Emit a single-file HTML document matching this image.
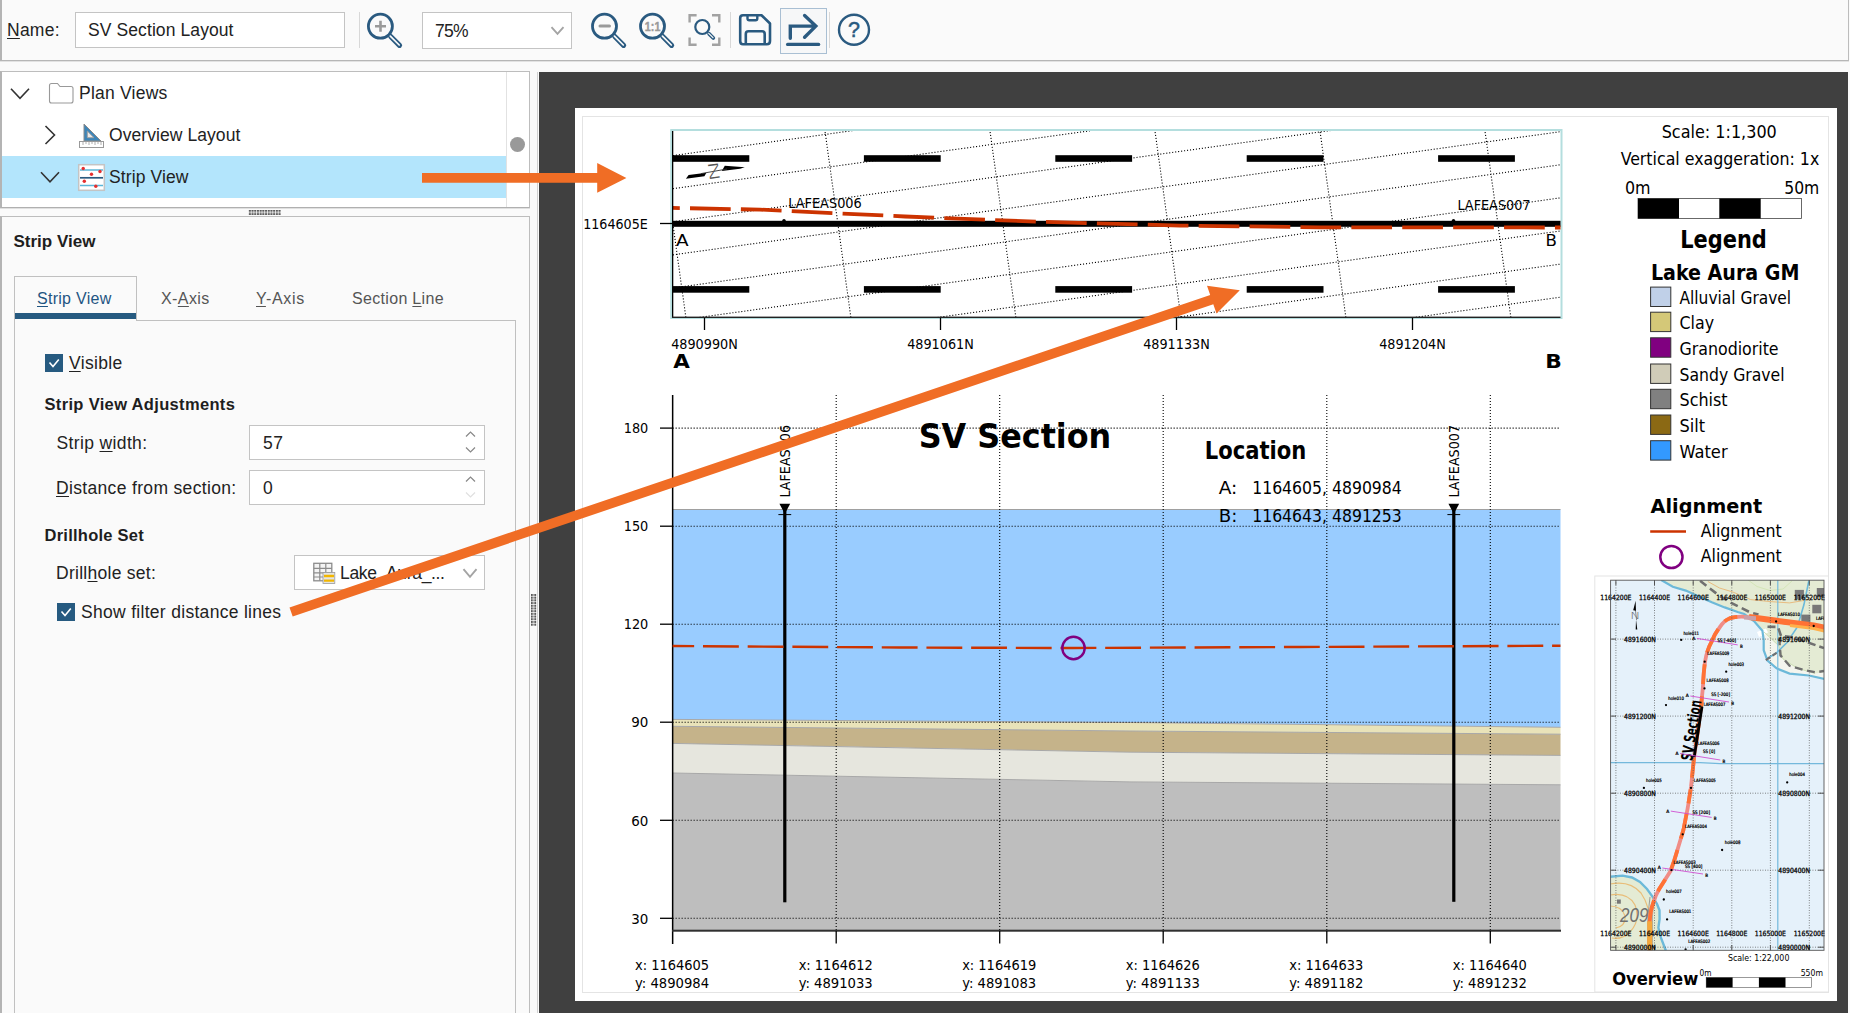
<!DOCTYPE html><html><head><meta charset="utf-8"><title>SV Section Layout</title><style>
html,body{margin:0;padding:0}
body{width:1850px;height:1013px;position:relative;overflow:hidden;background:#fafafa;font-family:"Liberation Sans", sans-serif;font-size:17.5px;color:#222}
.abs{position:absolute}
.t{position:absolute;white-space:nowrap;line-height:20px}
u{text-decoration:underline;text-underline-offset:2px;text-decoration-thickness:1px}
.box{position:absolute;box-sizing:border-box;border:1px solid #c4c4c4;background:#fff}
.b{font-weight:bold}
svg{position:absolute;left:0;top:0}
svg text{font-family:"DejaVu Sans Condensed", "DejaVu Sans", "Liberation Sans", sans-serif;fill:#000}
.ui{font-family:"Liberation Sans", sans-serif}
</style></head><body>
<div class="abs" style="left:0;top:0;width:1849px;height:61px;box-sizing:border-box;border-left:2px solid #b4b4b4;border-right:1px solid #bcbcbc;border-bottom:1px solid #b6b6b6;box-shadow:0 1px 0 #e2e2e2;background:#fafafa"></div>
<div class="t " style="left:7px;top:20px;font-size:17.5px;letter-spacing:0.250px"><u>N</u>ame:</div>
<div class="box" style="left:75px;top:12px;width:270px;height:36px"></div>
<div class="t " style="left:88px;top:20px;font-size:17.5px;letter-spacing:0.094px">SV Section Layout</div>
<div class="abs" style="left:359px;top:12px;width:1px;height:36px;background:#d8d8d8"></div>
<div class="box" style="left:422px;top:12px;width:149.5px;height:37px"></div>
<div class="t " style="left:435px;top:20.7px;font-size:17.5px;letter-spacing:-0.750px">75%</div>
<div class="abs" style="left:730px;top:12px;width:1px;height:36px;background:#d8d8d8"></div>
<div class="abs" style="left:829px;top:12px;width:1px;height:36px;background:#d8d8d8"></div>
<div class="box" style="left:780px;top:8px;width:47px;height:46px;border-color:#a9bfd3;background:#f6f7f8"></div>
<div class="box" style="left:0;top:71px;width:530px;height:137px;border-color:#bdbdbd;border-left:2px solid #b4b4b4;border-bottom:1px solid #b0b0b0;box-shadow:0 1px 0 #e0e0e0"></div>
<div class="abs" style="left:2px;top:156px;width:504px;height:42px;background:#b3e5fc"></div>
<div class="abs" style="left:506px;top:72px;width:1px;height:135px;background:#e2e2e2"></div>
<div class="abs" style="left:510px;top:137px;width:15px;height:15px;border-radius:50%;background:#999"></div>
<div class="t " style="left:79px;top:83px;font-size:17.5px;letter-spacing:0.222px">Plan Views</div>
<div class="t " style="left:109px;top:125px;font-size:17.5px;letter-spacing:0.071px">Overview Layout</div>
<div class="t " style="left:109px;top:167px;font-size:17.5px;letter-spacing:0.111px">Strip View</div>
<div class="box" style="left:0;top:216px;width:530px;height:800px;border-color:#bdbdbd;border-left:2px solid #b4b4b4;background:#fafafa"></div>
<div class="t b" style="left:13.5px;top:232px;font-size:17px;color:#1e1e1e;letter-spacing:0.000px">Strip View</div>
<div class="box" style="left:14px;top:320px;width:502px;height:700px;border-color:#c0c0c0;background:#fafafa"></div>
<div class="box" style="left:14px;top:276px;width:123px;height:45px;border-color:#c0c0c0;border-bottom:none;background:#fafafa"></div>
<div class="abs" style="left:15px;top:313px;width:121px;height:6px;background:#265a80"></div>
<div class="t " style="left:37px;top:289px;font-size:16px;color:#1f5582;letter-spacing:0.278px"><u>S</u>trip View</div>
<div class="t " style="left:161px;top:289px;font-size:16px;color:#555;letter-spacing:0.400px">X-<u>A</u>xis</div>
<div class="t " style="left:256px;top:289px;font-size:16px;color:#555;letter-spacing:0.700px"><u>Y</u>-Axis</div>
<div class="t " style="left:352px;top:289px;font-size:16px;color:#555;letter-spacing:0.318px">Section <u>L</u>ine</div>
<div class="abs" style="left:45px;top:354px;width:18px;height:18px;background:#265a80"></div>
<div class="t " style="left:69px;top:353px;font-size:17.5px;letter-spacing:0.333px"><u>V</u>isible</div>
<div class="t b" style="left:44.5px;top:394px;font-size:16.5px;color:#1e1e1e;letter-spacing:0.333px">Strip View Adjustments</div>
<div class="t " style="left:56.5px;top:433px;font-size:17.5px;letter-spacing:0.364px">Strip <u>w</u>idth:</div>
<div class="box" style="left:249px;top:425px;width:236px;height:35px"></div>
<div class="t " style="left:263px;top:433px;font-size:17.5px;letter-spacing:0.500px">57</div>
<div class="t " style="left:56px;top:478px;font-size:17.5px;letter-spacing:0.333px"><u>D</u>istance from section:</div>
<div class="box" style="left:249px;top:470px;width:236px;height:35px"></div>
<div class="t " style="left:263px;top:478px;font-size:17.5px">0</div>
<div class="t b" style="left:44.5px;top:525px;font-size:16.5px;color:#1e1e1e;letter-spacing:0.250px">Drillhole Set</div>
<div class="t " style="left:56px;top:563px;font-size:17.5px;letter-spacing:0.269px">Drill<u>h</u>ole set:</div>
<div class="box" style="left:294px;top:555px;width:191px;height:35px"></div>
<div class="t " style="left:340px;top:563px;font-size:17.5px;letter-spacing:-0.333px">Lake_Aura_...</div>
<div class="abs" style="left:57px;top:603px;width:18px;height:18px;background:#265a80"></div>
<div class="t " style="left:81px;top:602px;font-size:17.5px;letter-spacing:0.300px">Show filter distance lines</div>
<div class="abs" style="left:537px;top:72px;width:1px;height:941px;background:#d0d0d0"></div>
<div class="abs" style="left:539px;top:72px;width:1309px;height:941px;background:#404040"></div>
<div class="abs" style="left:575px;top:108px;width:1262px;height:892.5px;background:#fff"></div>
<div class="abs" style="left:582px;top:116px;width:1247px;height:877px;box-sizing:border-box;border:1px solid #e4e4e4"></div>
<svg width="1850" height="1013" viewBox="0 0 1850 1013">
<rect x="671.25" y="130" width="890.25" height="188" fill="#fff" stroke="#b4dede" stroke-width="2"/>
<clipPath id="sc"><rect x="672" y="131" width="888.5" height="186"/></clipPath>
<g clip-path="url(#sc)">
<path d="M667 123.3L1566 -1.5 M667 156.4L1566 31.6 M667 189.5L1566 64.7 M667 222.6L1566 97.8 M667 255.7L1566 130.9 M667 288.8L1566 164.0 M667 321.9L1566 197.1 M667 355.0L1566 230.2 M667 388.1L1566 263.3 M667 421.2L1566 296.4 M667 454.3L1566 329.5 M659.7 129L686.1 319 M824.7 129L851.1 319 M989.7 129L1016.1 319 M1154.7 129L1181.1 319 M1319.7 129L1346.1 319 M1484.7 129L1511.1 319 M1649.7 129L1676.1 319" stroke="#000" stroke-width="1.1" stroke-dasharray="1.1 1.9" fill="none"/>
<rect x="672.5" y="155.2" width="76.8" height="6.6" fill="#000"/>
<rect x="863.9" y="155.2" width="76.8" height="6.6" fill="#000"/>
<rect x="1055.3" y="155.2" width="76.8" height="6.6" fill="#000"/>
<rect x="1246.7" y="155.2" width="76.8" height="6.6" fill="#000"/>
<rect x="1438.1" y="155.2" width="76.8" height="6.6" fill="#000"/>
<rect x="672.5" y="286.09999999999997" width="76.8" height="6.6" fill="#000"/>
<rect x="863.9" y="286.09999999999997" width="76.8" height="6.6" fill="#000"/>
<rect x="1055.3" y="286.09999999999997" width="76.8" height="6.6" fill="#000"/>
<rect x="1246.7" y="286.09999999999997" width="76.8" height="6.6" fill="#000"/>
<rect x="1438.1" y="286.09999999999997" width="76.8" height="6.6" fill="#000"/>
</g>
<rect x="672" y="220.8" width="888.5" height="6" fill="#000"/>
<path d="M672.5 207.9 L760 209.6 L905 216.5 L1040 221.8 L1180 225.6 L1320 227.3 L1561 227.5" stroke="#cc3300" stroke-width="3.8" stroke-dasharray="40.7 10.2" stroke-dashoffset="33.4" fill="none" clip-path="url(#sc)"/>
<rect x="672" y="131" width="1.3" height="187" fill="#000"/>
<rect x="672" y="316.6" width="888.5" height="1.4" fill="#222"/>
<path d="M660 223.5H672" stroke="#000" stroke-width="1.3"/>
<path d="M704.5 318V330" stroke="#000" stroke-width="1.3"/>
<path d="M940.5 318V330" stroke="#000" stroke-width="1.3"/>
<path d="M1176.5 318V330" stroke="#000" stroke-width="1.3"/>
<path d="M1412.5 318V330" stroke="#000" stroke-width="1.3"/>
<text x="583.2" y="229" font-size="14.5" textLength="64.6" lengthAdjust="spacingAndGlyphs">1164605E</text>
<text x="704.5" y="348.6" font-size="14.5" text-anchor="middle" textLength="66.6" lengthAdjust="spacingAndGlyphs">4890990N</text>
<text x="940.5" y="348.6" font-size="14.5" text-anchor="middle" textLength="66.6" lengthAdjust="spacingAndGlyphs">4891061N</text>
<text x="1176.5" y="348.6" font-size="14.5" text-anchor="middle" textLength="66.6" lengthAdjust="spacingAndGlyphs">4891133N</text>
<text x="1412.5" y="348.6" font-size="14.5" text-anchor="middle" textLength="66.6" lengthAdjust="spacingAndGlyphs">4891204N</text>
<text x="673.2" y="368" font-size="19" textLength="16.6" lengthAdjust="spacingAndGlyphs" font-weight="bold">A</text>
<text x="1545.2" y="368" font-size="19" textLength="16.6" lengthAdjust="spacingAndGlyphs" font-weight="bold">B</text>
<text x="676.0" y="245.5" font-size="16.5" textLength="12.6" lengthAdjust="spacingAndGlyphs">A</text>
<text x="1545.5" y="245.7" font-size="16.5" textLength="11.4" lengthAdjust="spacingAndGlyphs">B</text>
<text x="788.2" y="208.4" font-size="13.5" textLength="73.6" lengthAdjust="spacingAndGlyphs">LAFEAS006</text>
<text x="1457.4" y="209.7" font-size="13.5" textLength="73.1" lengthAdjust="spacingAndGlyphs">LAFEAS007</text>
<circle cx="784" cy="220.6" r="1.7"/><circle cx="1453.5" cy="220.6" r="1.7"/>
<path d="M685.9 178.8 L688.6 175 L706.4 172.8 L704.4 176.2Z M724.8 165.8 L744.8 167.3 L740 168.8 L721.8 170.9Z" fill="#000"/>
<path d="M701 173.6 L727 169" stroke="#333" stroke-width="0.9" fill="none"/>
<text transform="translate(707.4 161.2) rotate(82)" font-size="13.6" font-weight="200" textLength="22.5" lengthAdjust="spacingAndGlyphs" style="fill:#555;font-family:'DejaVu Sans Light','DejaVu Sans',sans-serif">N</text>
<path d="M672.6 509.5 L1560.5 509.5 L1560.5 727.3 L1130.0 722.5 L672.6 719.4Z" fill="#99ccff"/>
<path d="M672.6 719.4 L1130.0 722.5 L1560.5 727.3 L1560.5 734.2 L1130.0 731.0 L672.6 726.3Z" fill="#e9e3b9"/>
<path d="M672.6 726.3 L1130.0 731.0 L1560.5 734.2 L1560.5 755.4 L1130.0 752.2 L672.6 743.4Z" fill="#c5b38a"/>
<path d="M672.6 743.4 L1130.0 752.2 L1560.5 755.4 L1560.5 784.8 L1130.0 781.9 L672.6 773.0Z" fill="#e6e6de"/>
<path d="M672.6 773.0 L1130.0 781.9 L1560.5 784.8 L1560.5 930.7 L672.6 930.7Z" fill="#bebebe"/>
<path d="M672.6 719.4 L1130.0 722.5 L1560.5 727.3" stroke="#a8a8a8" stroke-width="1" fill="none"/>
<path d="M672.6 726.3 L1130.0 731.0 L1560.5 734.2" stroke="#a8a8a8" stroke-width="1" fill="none"/>
<path d="M672.6 743.4 L1130.0 752.2 L1560.5 755.4" stroke="#a8a8a8" stroke-width="1" fill="none"/>
<path d="M672.6 773.0 L1130.0 781.9 L1560.5 784.8" stroke="#a8a8a8" stroke-width="1" fill="none"/>
<path d="M672.6 509.5H1560.5" stroke="#a0a0a0" stroke-width="1"/>
<path d="M672.6 918.3H1560.5 M672.6 820.3H1560.5 M672.6 722.2H1560.5 M672.6 624.2H1560.5 M672.6 526.2H1560.5 M672.6 428.1H1560.5 M836.2 395V930.7 M999.7 395V930.7 M1163.2 395V930.7 M1326.8 395V930.7 M1490.3 395V930.7" stroke="#000" stroke-width="1.1" stroke-dasharray="1.1 1.9" fill="none"/>
<rect x="671.9" y="395" width="1.5" height="549" fill="#000"/>
<rect x="672" y="929.7" width="889" height="2" fill="#303030"/>
<path d="M660 918.3H672" stroke="#000" stroke-width="1.3"/>
<text x="648.3" y="923.5" font-size="14.5" text-anchor="end" textLength="17.1" lengthAdjust="spacingAndGlyphs">30</text>
<path d="M660 820.3H672" stroke="#000" stroke-width="1.3"/>
<text x="648.3" y="825.5" font-size="14.5" text-anchor="end" textLength="17.1" lengthAdjust="spacingAndGlyphs">60</text>
<path d="M660 722.2H672" stroke="#000" stroke-width="1.3"/>
<text x="648.3" y="727.4" font-size="14.5" text-anchor="end" textLength="17.1" lengthAdjust="spacingAndGlyphs">90</text>
<path d="M660 624.2H672" stroke="#000" stroke-width="1.3"/>
<text x="648.3" y="629.4" font-size="14.5" text-anchor="end" textLength="24.6" lengthAdjust="spacingAndGlyphs">120</text>
<path d="M660 526.2H672" stroke="#000" stroke-width="1.3"/>
<text x="648.3" y="531.4" font-size="14.5" text-anchor="end" textLength="24.6" lengthAdjust="spacingAndGlyphs">150</text>
<path d="M660 428.1H672" stroke="#000" stroke-width="1.3"/>
<text x="648.3" y="433.3" font-size="14.5" text-anchor="end" textLength="24.6" lengthAdjust="spacingAndGlyphs">180</text>
<text x="672.1" y="970.2" font-size="14.5" text-anchor="middle" textLength="74.1" lengthAdjust="spacingAndGlyphs">x: 1164605</text>
<text x="672.1" y="988.2" font-size="14.5" text-anchor="middle" textLength="74.1" lengthAdjust="spacingAndGlyphs">y: 4890984</text>
<path d="M836.2 931V943.5" stroke="#000" stroke-width="1.3"/>
<text x="835.7" y="970.2" font-size="14.5" text-anchor="middle" textLength="74.1" lengthAdjust="spacingAndGlyphs">x: 1164612</text>
<text x="835.7" y="988.2" font-size="14.5" text-anchor="middle" textLength="74.1" lengthAdjust="spacingAndGlyphs">y: 4891033</text>
<path d="M999.7 931V943.5" stroke="#000" stroke-width="1.3"/>
<text x="999.2" y="970.2" font-size="14.5" text-anchor="middle" textLength="74.1" lengthAdjust="spacingAndGlyphs">x: 1164619</text>
<text x="999.2" y="988.2" font-size="14.5" text-anchor="middle" textLength="74.1" lengthAdjust="spacingAndGlyphs">y: 4891083</text>
<path d="M1163.2 931V943.5" stroke="#000" stroke-width="1.3"/>
<text x="1162.8" y="970.2" font-size="14.5" text-anchor="middle" textLength="74.1" lengthAdjust="spacingAndGlyphs">x: 1164626</text>
<text x="1162.8" y="988.2" font-size="14.5" text-anchor="middle" textLength="74.1" lengthAdjust="spacingAndGlyphs">y: 4891133</text>
<path d="M1326.8 931V943.5" stroke="#000" stroke-width="1.3"/>
<text x="1326.3" y="970.2" font-size="14.5" text-anchor="middle" textLength="74.1" lengthAdjust="spacingAndGlyphs">x: 1164633</text>
<text x="1326.3" y="988.2" font-size="14.5" text-anchor="middle" textLength="74.1" lengthAdjust="spacingAndGlyphs">y: 4891182</text>
<path d="M1490.3 931V943.5" stroke="#000" stroke-width="1.3"/>
<text x="1489.8" y="970.2" font-size="14.5" text-anchor="middle" textLength="74.1" lengthAdjust="spacingAndGlyphs">x: 1164640</text>
<text x="1489.8" y="988.2" font-size="14.5" text-anchor="middle" textLength="74.1" lengthAdjust="spacingAndGlyphs">y: 4891232</text>
<text x="918.7" y="448" font-size="34" textLength="192.6" lengthAdjust="spacingAndGlyphs" font-weight="bold">SV Section</text>
<text x="1204.7" y="458.5" font-size="24" textLength="101.6" lengthAdjust="spacingAndGlyphs" font-weight="bold">Location</text>
<text x="1218.7" y="493.7" font-size="17" textLength="18.6" lengthAdjust="spacingAndGlyphs">A:</text>
<text x="1252.2" y="493.7" font-size="17" textLength="149.6" lengthAdjust="spacingAndGlyphs">1164605, 4890984</text>
<text x="1218.7" y="521.5" font-size="17" textLength="18.6" lengthAdjust="spacingAndGlyphs">B:</text>
<text x="1252.2" y="521.5" font-size="17" textLength="149.6" lengthAdjust="spacingAndGlyphs">1164643, 4891253</text>
<rect x="783.1999999999999" y="508" width="3.2" height="394.29999999999995" fill="#000"/>
<path d="M779.4 503.8H790.1999999999999L784.8 513.8Z" fill="#000"/>
<path d="M778.4 514.6H791.1999999999999" stroke="#000" stroke-width="1"/>
<text transform="translate(789.9 497.6) rotate(-90)" font-size="14.4" textLength="72.6" lengthAdjust="spacingAndGlyphs">LAFEAS006</text>
<rect x="1452.2" y="508" width="3.2" height="393.79999999999995" fill="#000"/>
<path d="M1448.3999999999999 503.8H1459.2L1453.8 513.8Z" fill="#000"/>
<path d="M1447.3999999999999 514.6H1460.2" stroke="#000" stroke-width="1"/>
<text transform="translate(1458.8999999999999 497.6) rotate(-90)" font-size="14.4" textLength="72.6" lengthAdjust="spacingAndGlyphs">LAFEAS007</text>
<path d="M672.6 646 L900 647.5 L1073 648 L1300 647 L1560.5 645.7" stroke="#cc3300" stroke-width="2.4" stroke-dasharray="35.85 8.84" stroke-dashoffset="14.3" fill="none"/>
<circle cx="1073.5" cy="648" r="11.2" fill="none" stroke="#800080" stroke-width="2.4"/>
<text x="1661.7" y="138.1" font-size="17" textLength="115.1" lengthAdjust="spacingAndGlyphs">Scale: 1:1,300</text>
<text x="1620.7" y="165.1" font-size="17" textLength="198.6" lengthAdjust="spacingAndGlyphs">Vertical exaggeration: 1x</text>
<text x="1624.9" y="194.29999999999998" font-size="17" textLength="25.6" lengthAdjust="spacingAndGlyphs">0m</text>
<text x="1819.3" y="194.29999999999998" font-size="17" text-anchor="end" textLength="35.1" lengthAdjust="spacingAndGlyphs">50m</text>
<rect x="1638" y="198.5" width="163.5" height="20" fill="#fff" stroke="#444" stroke-width="0.8"/>
<rect x="1638" y="198.5" width="41" height="20" fill="#000"/><rect x="1719.3" y="198.5" width="41.4" height="20" fill="#000"/>
<text x="1680.2" y="248.1" font-size="24" textLength="86.6" lengthAdjust="spacingAndGlyphs" font-weight="bold">Legend</text>
<text x="1650.9" y="279.59999999999997" font-size="21" textLength="148.6" lengthAdjust="spacingAndGlyphs" font-weight="bold">Lake Aura GM</text>
<rect x="1650.6" y="287.09999999999997" width="20.2" height="19.4" fill="#c0d0e8" stroke="#333" stroke-width="1"/>
<text x="1679.5" y="304.1" font-size="17" textLength="111.6" lengthAdjust="spacingAndGlyphs">Alluvial Gravel</text>
<rect x="1650.6" y="312.2" width="20.2" height="19.4" fill="#d4c878" stroke="#333" stroke-width="1"/>
<text x="1679.5" y="329.2" font-size="17" textLength="34.6" lengthAdjust="spacingAndGlyphs">Clay</text>
<rect x="1650.6" y="337.79999999999995" width="20.2" height="19.4" fill="#800080" stroke="#333" stroke-width="1"/>
<text x="1679.5" y="354.8" font-size="17" textLength="99.1" lengthAdjust="spacingAndGlyphs">Granodiorite</text>
<rect x="1650.6" y="364.0" width="20.2" height="19.4" fill="#d0ccb8" stroke="#333" stroke-width="1"/>
<text x="1679.5" y="381.0" font-size="17" textLength="105.1" lengthAdjust="spacingAndGlyphs">Sandy Gravel</text>
<rect x="1650.6" y="389.29999999999995" width="20.2" height="19.4" fill="#808080" stroke="#333" stroke-width="1"/>
<text x="1679.5" y="406.3" font-size="17" textLength="48.1" lengthAdjust="spacingAndGlyphs">Schist</text>
<rect x="1650.6" y="415.0" width="20.2" height="19.4" fill="#8b6914" stroke="#333" stroke-width="1"/>
<text x="1679.5" y="432.0" font-size="17" textLength="25.6" lengthAdjust="spacingAndGlyphs">Silt</text>
<rect x="1650.6" y="440.7" width="20.2" height="19.4" fill="#3399ff" stroke="#333" stroke-width="1"/>
<text x="1679.5" y="457.7" font-size="17" textLength="48.1" lengthAdjust="spacingAndGlyphs">Water</text>
<text x="1650.6" y="512.8000000000001" font-size="20" textLength="111.6" lengthAdjust="spacingAndGlyphs" font-weight="bold">Alignment</text>
<path d="M1650.2 531.6H1686" stroke="#cc3300" stroke-width="2.5"/>
<text x="1700.7" y="536.7" font-size="17" textLength="81.1" lengthAdjust="spacingAndGlyphs">Alignment</text>
<circle cx="1671.4" cy="557" r="11.1" fill="none" stroke="#800080" stroke-width="2.5"/>
<text x="1700.7" y="562.2" font-size="17" textLength="81.1" lengthAdjust="spacingAndGlyphs">Alignment</text>
<clipPath id="ovc"><rect x="1590" y="570" width="238.5" height="430"/></clipPath>
<rect x="1594.8" y="576" width="300" height="416" fill="none" stroke="#e4e4e4" stroke-width="1" clip-path="url(#ovc)"/>
<clipPath id="mc"><rect x="1610.6" y="580.2" width="213.4000000000001" height="370.0999999999999"/></clipPath>
<rect x="1610.6" y="580.2" width="213.4000000000001" height="370.0999999999999" fill="#e5f1fa"/>
<g clip-path="url(#mc)">
<path d="M1661.2 580 L1672.8 586.7 L1685.8 590.6 L1698.8 596.4 L1711.8 602.2 L1724.7 607.4 L1737.7 612 L1744.2 613.9 L1754.6 621.7 L1762.4 630.8 L1763.7 639.9 L1763.7 650.2 L1767.5 660.6 L1776.6 668.4 L1789.6 673.6 L1809 675.5 L1825 679 L1825 579Z" fill="#e4ebd4"/>
<path d="M1762.4 630.8 L1763.7 639.9 L1763.7 650.2 L1767.5 660.6 L1776.6 668.4 L1789.6 673.6 L1809 675.5 L1825 679 L1825 672 L1815 673.5 L1797 668 L1783 659 L1779 646 L1764 632Z" fill="#f4f5ee"/>
<path d="M1757 632 L1766 628.5 L1768 632.5 L1759 637Z" fill="#fff"/>
<path d="M1764 632 L1779 646 L1783 659 L1797 668 L1815 673.5" stroke="#c5dba8" stroke-width="0.8" fill="none"/>
<path d="M1748 580 L1757 586.5 L1770 590.5 L1783 589 L1792 581" stroke="#cfe3b0" stroke-width="0.8" fill="none"/>
<path d="M1707.9 581.5 L1719.5 588 L1732.5 591.9 L1750.7 599.6 L1770.1 601.6 L1789.6 602.9 L1809.1 599.6" stroke="#e8ae6a" stroke-width="0.8" fill="none"/>
<path d="M1661.2 580 L1672.8 586.7 L1685.8 590.6 L1698.8 596.4 L1711.8 602.2 L1724.7 607.4 L1737.7 612 L1744.2 613.9 L1754.6 621.7 L1762.4 630.8 L1763.7 639.9 L1763.7 650.2 L1767.5 660.6 L1776.6 668.4 L1789.6 673.6 L1809 675.5 L1825 679" stroke="#6cb9d9" stroke-width="2.2" fill="none"/>
<path d="M1809 580 L1803.9 604.8 L1797.4 626.9 L1787 642.5 L1776.6 652.8 L1766.3 659.3" stroke="#6cb9d9" stroke-width="1.6" fill="none"/>
<path d="M1777.8 580 V950.5" stroke="#74b9dc" stroke-width="1.2" fill="none"/>
<path d="M1610 762.6 H1700 L1720 763.6 H1824" stroke="#74b9dc" stroke-width="1.2" fill="none"/>
<path d="M1700.1 580.8 L1709.2 588 L1719.5 595.8 L1731.2 602.9 L1741.6 608.1 L1750.7 612.6 L1758.5 614.6" stroke="#707070" stroke-width="2.6" stroke-dasharray="8 4.5" fill="none"/>
<path d="M1767.5 626.7 L1778 626.9 L1781 636 L1793.5 637.3 L1807.8 642.5 L1824 648" stroke="#707070" stroke-width="2.6" stroke-dasharray="8 4" fill="none"/>
<path d="M1779.2 637.3 L1780.5 655.4 L1789.6 665.8 L1802.6 669.7 L1815.5 672.3 L1824 671" stroke="#707070" stroke-width="2.4" stroke-dasharray="8 4.5" fill="none"/>
<path d="M1776.6 652.8 L1765 660.6" stroke="#707070" stroke-width="2.2" stroke-dasharray="5 3" fill="none"/>
<rect x="1794.8" y="589.9" width="9.1" height="9.1" fill="#787878"/>
<rect x="1816.8" y="588" width="8" height="9" fill="#787878"/>
<rect x="1812.3" y="604.8" width="9.1" height="8.5" fill="#787878"/>
<rect x="1801.3" y="614.6" width="9.1" height="7.8" fill="#787878"/>
<path d="M1609 876.9 L1622.6 875.6 L1632 877.5 L1640 882 L1647 889 L1653 897.3 L1657 904 L1659.5 910.3 L1659.6 919 L1658.4 927.7 L1661 938 L1666 951 L1609 951Z" fill="#e4ebd4"/>
<path d="M1609 876.9 L1622.6 875.6 L1632 877.5 L1640 882 L1647 889 L1653 897.3 L1657 904 L1659.5 910.3 L1659.6 919 L1658.4 927.7 L1661 938 L1666 951" stroke="#6cb9d9" stroke-width="2.4" fill="none"/>
<path d="M1610 884 Q1630 880 1641 893 Q1650 906 1650 925 M1610 895 Q1628 892 1635 905 Q1641 920 1630 932 Q1622 940 1612 938 M1610 906 Q1622 906 1625 916 Q1626 926 1616 928" stroke="#e9bd78" stroke-width="1.2" fill="none"/>
<rect x="1617" y="899.5" width="3.8" height="4.2" fill="#777"/>
<text x="1620" y="922.3" font-size="20" font-style="italic" textLength="28.5" lengthAdjust="spacingAndGlyphs" class="ui" style="fill:#707070">209</text>
<path d="M1650 897 L1648 915 L1647.5 951" stroke="#888" stroke-width="0.8" fill="none"/><path d="M1655 893 L1652.5 915 L1652.5 951" stroke="#888" stroke-width="0.6" fill="none"/>
<path d="M1649.7 952 L1649.7 921.2 Q1650.5 910 1653 903.8 Q1655.5 895 1659.5 888.6 L1670.4 871.2 Q1674 862 1676.9 851.7 L1683.4 830 L1687.7 808.2 L1691 787 L1694 758 L1697.5 733 L1700.8 709 L1702.9 687.3 Q1703.5 672 1705.1 661.2 Q1707 650 1711.6 641.7 Q1715 633 1720.3 626.5 Q1724 620.5 1729.5 618.4 Q1735 616.6 1742 616.7 L1759.4 618.4 L1776.8 621.3 L1813.7 626.2 L1826 628.8" stroke="#f08c86" stroke-width="3.8" fill="none" stroke-linejoin="round"/>
<path d="M1649.7 952 L1649.7 921.2 Q1650.5 910 1653 903.8 Q1655.5 895 1659.5 888.6 L1670.4 871.2 Q1674 862 1676.9 851.7 L1683.4 830 L1687.7 808.2 L1691 787 L1694 758 L1697.5 733 L1700.8 709 L1702.9 687.3 Q1703.5 672 1705.1 661.2 Q1707 650 1711.6 641.7 Q1715 633 1720.3 626.5 Q1724 620.5 1729.5 618.4 Q1735 616.6 1742 616.7 L1759.4 618.4 L1776.8 621.3 L1813.7 626.2 L1826 628.8" stroke="#ff7235" stroke-width="3.8" fill="none" stroke-dasharray="20 12 26 10 14 12" stroke-dashoffset="6" stroke-linejoin="round"/>
<path d="M1749 617 L1776.8 620.8 L1813.7 625.4 L1826 628" stroke="#ff7235" stroke-width="6" fill="none"/>
<path d="M1790 625.5 L1813.7 628.6 L1826 631.5" stroke="#ffb04a" stroke-width="3" fill="none"/>
<path d="M1649.7 952 L1649.7 921.2" stroke="#f5a83c" stroke-width="5" fill="none"/>
<path d="M1744 615.5 L1756 616.2 L1756 620.4 L1744 619.6Z" fill="#c9a0a8"/>
<path d="M1615.9 580V951 M1654.5 580V951 M1693.2 580V951 M1731.8 580V951 M1770.4 580V951 M1809.3 580V951 M1610 639.1H1825 M1610 716.1H1825 M1610 793.2H1825 M1610 870.2H1825 M1610 947.2H1825" stroke="#555" stroke-width="0.8" stroke-dasharray="0.9 1.6" fill="none"/>
<path d="M1615.9 580V585M1615.9 945V951 M1654.5 580V585M1654.5 945V951 M1693.2 580V585M1693.2 945V951 M1731.8 580V585M1731.8 945V951 M1770.4 580V585M1770.4 945V951 M1809.3 580V585M1809.3 945V951 M1610 639.1H1616M1818 639.1H1825 M1610 716.1H1616M1818 716.1H1825 M1610 793.2H1616M1818 793.2H1825 M1610 870.2H1616M1818 870.2H1825 M1610 947.2H1616M1818 947.2H1825" stroke="#444" stroke-width="0.9" fill="none"/>
<path d="M1702 706.5 L1694.2 757.1" stroke="#000" stroke-width="2.8"/>
<text transform="translate(1692.3 761.3) rotate(-81.3)" font-size="16" font-weight="bold" textLength="61" lengthAdjust="spacingAndGlyphs">SV Section</text>
<path d="M1696.9 638.4L1737.7 644.9" stroke="#d050d0" stroke-width="0.9"/>
<text x="1692.3000000000002" y="639.8" font-size="4.6" textLength="3" lengthAdjust="spacingAndGlyphs" stroke="#000" stroke-width="0.22">A</text>
<text x="1739.9" y="647.5" font-size="4.6" textLength="2.8" lengthAdjust="spacingAndGlyphs" stroke="#000" stroke-width="0.22">B</text>
<text x="1717.5" y="642" font-size="4.6" textLength="18.5" lengthAdjust="spacingAndGlyphs" stroke="#000" stroke-width="0.22">SS [-400]</text>
<path d="M1690.3 696L1729 702" stroke="#d050d0" stroke-width="0.9"/>
<text x="1685.7" y="697.4" font-size="4.6" textLength="3" lengthAdjust="spacingAndGlyphs" stroke="#000" stroke-width="0.22">A</text>
<text x="1731.2" y="704.6" font-size="4.6" textLength="2.8" lengthAdjust="spacingAndGlyphs" stroke="#000" stroke-width="0.22">B</text>
<text x="1711.2" y="695.5" font-size="4.6" textLength="18.8" lengthAdjust="spacingAndGlyphs" stroke="#000" stroke-width="0.22">SS [-200]</text>
<path d="M1680.1 753.5L1720.3 760" stroke="#d050d0" stroke-width="0.9"/>
<text x="1675.5" y="754.9" font-size="4.6" textLength="3" lengthAdjust="spacingAndGlyphs" stroke="#000" stroke-width="0.22">A</text>
<text x="1722.5" y="762.6" font-size="4.6" textLength="2.8" lengthAdjust="spacingAndGlyphs" stroke="#000" stroke-width="0.22">B</text>
<text x="1703" y="753" font-size="4.6" textLength="12" lengthAdjust="spacingAndGlyphs" stroke="#000" stroke-width="0.22">SS [0]</text>
<path d="M1670.8 811.1L1711.6 817.4" stroke="#d050d0" stroke-width="0.9"/>
<text x="1666.2" y="812.5" font-size="4.6" textLength="3" lengthAdjust="spacingAndGlyphs" stroke="#000" stroke-width="0.22">A</text>
<text x="1713.8" y="820.0" font-size="4.6" textLength="2.8" lengthAdjust="spacingAndGlyphs" stroke="#000" stroke-width="0.22">B</text>
<text x="1692.5" y="814.1" font-size="4.6" textLength="17.5" lengthAdjust="spacingAndGlyphs" stroke="#000" stroke-width="0.22">SS [200]</text>
<path d="M1662.3 868L1703 874" stroke="#d050d0" stroke-width="0.9"/>
<text x="1657.7" y="869.4" font-size="4.6" textLength="3" lengthAdjust="spacingAndGlyphs" stroke="#000" stroke-width="0.22">A</text>
<text x="1705.2" y="876.6" font-size="4.6" textLength="2.8" lengthAdjust="spacingAndGlyphs" stroke="#000" stroke-width="0.22">B</text>
<text x="1685" y="867.5" font-size="4.6" textLength="17.3" lengthAdjust="spacingAndGlyphs" stroke="#000" stroke-width="0.22">SS [400]</text>
<circle cx="1681.2" cy="639.9" r="1.15"/>
<text x="1683.4" y="634.5" font-size="4.6" textLength="15.7" lengthAdjust="spacingAndGlyphs" stroke="#000" stroke-width="0.22">hole011</text>
<circle cx="1726.2" cy="671.7" r="1.15"/>
<text x="1728.4" y="666.2" font-size="4.6" textLength="15.7" lengthAdjust="spacingAndGlyphs" stroke="#000" stroke-width="0.22">hole003</text>
<circle cx="1666" cy="705.1" r="1.15"/>
<text x="1668.2" y="699.7" font-size="4.6" textLength="15.7" lengthAdjust="spacingAndGlyphs" stroke="#000" stroke-width="0.22">hole010</text>
<circle cx="1787.2" cy="782.4" r="1.15"/>
<text x="1789.2" y="775.7" font-size="4.6" textLength="15.7" lengthAdjust="spacingAndGlyphs" stroke="#000" stroke-width="0.22">hole004</text>
<circle cx="1643.9" cy="787.9" r="1.15"/>
<text x="1646" y="781.8" font-size="4.6" textLength="15.7" lengthAdjust="spacingAndGlyphs" stroke="#000" stroke-width="0.22">hole005</text>
<circle cx="1722.1" cy="850" r="1.15"/>
<text x="1724.7" y="844.1" font-size="4.6" textLength="15.7" lengthAdjust="spacingAndGlyphs" stroke="#000" stroke-width="0.22">hole008</text>
<circle cx="1663.8" cy="899.5" r="1.15"/>
<text x="1666" y="893.4" font-size="4.6" textLength="15.7" lengthAdjust="spacingAndGlyphs" stroke="#000" stroke-width="0.22">hole007</text>
<circle cx="1704.7" cy="661.7" r="1.15"/>
<text x="1707.3" y="655.1" font-size="4.6" textLength="22" lengthAdjust="spacingAndGlyphs" stroke="#000" stroke-width="0.22">LAFEAS009</text>
<circle cx="1704.5" cy="688.4" r="1.15"/>
<text x="1706.6" y="682.3" font-size="4.6" textLength="22" lengthAdjust="spacingAndGlyphs" stroke="#000" stroke-width="0.22">LAFEAS008</text>
<text x="1703.4" y="706.2" font-size="4.6" textLength="22" lengthAdjust="spacingAndGlyphs" stroke="#000" stroke-width="0.22">LAFEAS007</text>
<text x="1697.5" y="745.3" font-size="4.6" textLength="22" lengthAdjust="spacingAndGlyphs" stroke="#000" stroke-width="0.22">LAFEAS006</text>
<circle cx="1691" cy="787.9" r="1.15"/>
<text x="1693.8" y="781.8" font-size="4.6" textLength="22" lengthAdjust="spacingAndGlyphs" stroke="#000" stroke-width="0.22">LAFEAS005</text>
<circle cx="1682.7" cy="834.3" r="1.15"/>
<text x="1684.9" y="828.2" font-size="4.6" textLength="22" lengthAdjust="spacingAndGlyphs" stroke="#000" stroke-width="0.22">LAFEAS004</text>
<circle cx="1671.5" cy="870.1" r="1.15"/>
<text x="1673.6" y="864.3" font-size="4.6" textLength="22" lengthAdjust="spacingAndGlyphs" stroke="#000" stroke-width="0.22">LAFEAS003</text>
<circle cx="1667.1" cy="919.4" r="1.15"/>
<text x="1669.3" y="913.1" font-size="4.6" textLength="22" lengthAdjust="spacingAndGlyphs" stroke="#000" stroke-width="0.22">LAFEAS001</text>
<circle cx="1685.6" cy="949.4" r="1.15"/>
<text x="1688.2" y="943.3" font-size="4.6" textLength="22" lengthAdjust="spacingAndGlyphs" stroke="#000" stroke-width="0.22">LAFEAS002</text>
<circle cx="1776.1" cy="621.5" r="1.15"/>
<text x="1777.9" y="615.6" font-size="4.6" textLength="22" lengthAdjust="spacingAndGlyphs" stroke="#000" stroke-width="0.22">LAFEAS010</text>
<circle cx="1813.7" cy="626" r="1.15"/>
<text x="1815.9" y="620.4" font-size="4.6" textLength="22" lengthAdjust="spacingAndGlyphs" stroke="#000" stroke-width="0.22">LAFEAS011</text>
<path d="M1635.6 600.8 L1633.2 610.2 L1636 610.8Z M1636 619.6 L1637.3 629.6 L1635.7 629.4Z" fill="#000"/><path d="M1635.4 610 L1636.6 620" stroke="#222" stroke-width="0.5"/>
<text x="1630.2" y="619.2" font-size="8" font-weight="200" textLength="10" lengthAdjust="spacingAndGlyphs" style="fill:#666;font-family:'DejaVu Sans Light','DejaVu Sans',sans-serif">N</text>
</g>
<text x="1615.9" y="599.8" font-size="7.1" text-anchor="middle" textLength="31.2" lengthAdjust="spacingAndGlyphs" stroke="#000" stroke-width="0.25">1164200E</text>
<text x="1615.9" y="936" font-size="7.1" text-anchor="middle" textLength="31.2" lengthAdjust="spacingAndGlyphs" stroke="#000" stroke-width="0.25">1164200E</text>
<text x="1654.5" y="599.8" font-size="7.1" text-anchor="middle" textLength="31.2" lengthAdjust="spacingAndGlyphs" stroke="#000" stroke-width="0.25">1164400E</text>
<text x="1654.5" y="936" font-size="7.1" text-anchor="middle" textLength="31.2" lengthAdjust="spacingAndGlyphs" stroke="#000" stroke-width="0.25">1164400E</text>
<text x="1693.2" y="599.8" font-size="7.1" text-anchor="middle" textLength="31.2" lengthAdjust="spacingAndGlyphs" stroke="#000" stroke-width="0.25">1164600E</text>
<text x="1693.2" y="936" font-size="7.1" text-anchor="middle" textLength="31.2" lengthAdjust="spacingAndGlyphs" stroke="#000" stroke-width="0.25">1164600E</text>
<text x="1731.8" y="599.8" font-size="7.1" text-anchor="middle" textLength="31.2" lengthAdjust="spacingAndGlyphs" stroke="#000" stroke-width="0.25">1164800E</text>
<text x="1731.8" y="936" font-size="7.1" text-anchor="middle" textLength="31.2" lengthAdjust="spacingAndGlyphs" stroke="#000" stroke-width="0.25">1164800E</text>
<text x="1770.4" y="599.8" font-size="7.1" text-anchor="middle" textLength="31.2" lengthAdjust="spacingAndGlyphs" stroke="#000" stroke-width="0.25">1165000E</text>
<text x="1770.4" y="936" font-size="7.1" text-anchor="middle" textLength="31.2" lengthAdjust="spacingAndGlyphs" stroke="#000" stroke-width="0.25">1165000E</text>
<text x="1809.3" y="599.8" font-size="7.1" text-anchor="middle" textLength="31.2" lengthAdjust="spacingAndGlyphs" stroke="#000" stroke-width="0.25">1165200E</text>
<text x="1809.3" y="936" font-size="7.1" text-anchor="middle" textLength="31.2" lengthAdjust="spacingAndGlyphs" stroke="#000" stroke-width="0.25">1165200E</text>
<g clip-path="url(#mc)">
<text x="1655.9" y="641.8000000000001" font-size="7.1" text-anchor="end" textLength="31.8" lengthAdjust="spacingAndGlyphs" stroke="#000" stroke-width="0.25">4891600N</text>
<text x="1778.3" y="641.8000000000001" font-size="7.1" textLength="31.8" lengthAdjust="spacingAndGlyphs" stroke="#000" stroke-width="0.25">4891600N</text>
<text x="1655.9" y="718.8000000000001" font-size="7.1" text-anchor="end" textLength="31.8" lengthAdjust="spacingAndGlyphs" stroke="#000" stroke-width="0.25">4891200N</text>
<text x="1778.3" y="718.8000000000001" font-size="7.1" textLength="31.8" lengthAdjust="spacingAndGlyphs" stroke="#000" stroke-width="0.25">4891200N</text>
<text x="1655.9" y="795.9000000000001" font-size="7.1" text-anchor="end" textLength="31.8" lengthAdjust="spacingAndGlyphs" stroke="#000" stroke-width="0.25">4890800N</text>
<text x="1778.3" y="795.9000000000001" font-size="7.1" textLength="31.8" lengthAdjust="spacingAndGlyphs" stroke="#000" stroke-width="0.25">4890800N</text>
<text x="1655.9" y="872.9000000000001" font-size="7.1" text-anchor="end" textLength="31.8" lengthAdjust="spacingAndGlyphs" stroke="#000" stroke-width="0.25">4890400N</text>
<text x="1778.3" y="872.9000000000001" font-size="7.1" textLength="31.8" lengthAdjust="spacingAndGlyphs" stroke="#000" stroke-width="0.25">4890400N</text>
<text x="1655.9" y="949.9000000000001" font-size="7.1" text-anchor="end" textLength="31.8" lengthAdjust="spacingAndGlyphs" stroke="#000" stroke-width="0.25">4890000N</text>
<text x="1778.3" y="949.9000000000001" font-size="7.1" textLength="31.8" lengthAdjust="spacingAndGlyphs" stroke="#000" stroke-width="0.25">4890000N</text>
</g>
<rect x="1610.6" y="580.2" width="213.4000000000001" height="370.0999999999999" fill="none" stroke="#555" stroke-width="0.9"/>
<text x="1727.9" y="960.9" font-size="8.5" textLength="61.5" lengthAdjust="spacingAndGlyphs">Scale: 1:22,000</text>
<text x="1612.2" y="984.7" font-size="17.4" textLength="86.1" lengthAdjust="spacingAndGlyphs" font-weight="bold">Overview</text>
<text x="1699.5" y="975.5" font-size="8.5" textLength="12" lengthAdjust="spacingAndGlyphs">0m</text>
<text x="1823" y="975.5" font-size="8.5" text-anchor="end" textLength="22.3" lengthAdjust="spacingAndGlyphs">550m</text>
<rect x="1706.2" y="977.5" width="105.5" height="9.9" fill="#fff" stroke="#555" stroke-width="0.6"/>
<rect x="1706.2" y="977.5" width="26.4" height="9.9"/><rect x="1758.9" y="977.5" width="26.6" height="9.9"/>
<path d="M422 173.1H597.2V163L626.4 177.9L597.2 192.8V182.8H422Z" fill="#f06d25"/>
<path d="M292.7 616.6 L1213.3 304.3 L1216.5 313.6 L1239.8 290.2 L1207.0 285.8 L1210.2 295.1 L289.5 607.4Z" fill="#f06d25"/>
<circle cx="380.4" cy="26.2" r="12" fill="none" stroke="#2a5a80" stroke-width="2.8"/>
<path d="M390.7 36.5L399.5 45.3" stroke="#2a5a80" stroke-width="5.2" stroke-linecap="round"/>
<path d="M390.3 36.1L399.2 45.0" stroke="#fafafa" stroke-width="1.7" stroke-linecap="round"/>
<path d="M375 26.2H386M380.5 20.7V31.7" stroke="#9a9a9a" stroke-width="2.6"/>
<circle cx="604.5" cy="26.2" r="12" fill="none" stroke="#2a5a80" stroke-width="2.8"/>
<path d="M614.8 36.5L623.6 45.3" stroke="#2a5a80" stroke-width="5.2" stroke-linecap="round"/>
<path d="M614.4 36.1L623.3 45.0" stroke="#fafafa" stroke-width="1.7" stroke-linecap="round"/>
<path d="M600 26H609.5" stroke="#9a9a9a" stroke-width="3" stroke-linecap="round"/>
<circle cx="652.5" cy="26.2" r="12" fill="none" stroke="#2a5a80" stroke-width="2.8"/>
<path d="M662.8 36.5L671.6 45.3" stroke="#2a5a80" stroke-width="5.2" stroke-linecap="round"/>
<path d="M662.4 36.1L671.3 45.0" stroke="#fafafa" stroke-width="1.7" stroke-linecap="round"/>
<text x="652.6" y="31.2" font-size="13" font-weight="bold" text-anchor="middle" class="ui" style="fill:#9a9a9a" stroke="#9a9a9a" stroke-width="0.4" textLength="15.5" lengthAdjust="spacingAndGlyphs">1:1</text>
<path d="M689.6 22.5V15.3H696.6M712 15.3H719.3V22.5M719.3 37.5V44.7H712M696.6 44.7H689.6V37.5" stroke="#a2a2a2" stroke-width="2.4" fill="none"/>
<circle cx="702.3" cy="27" r="7" fill="none" stroke="#2a5a80" stroke-width="2.2"/>
<path d="M709.1 33.8L713.3 38.0" stroke="#2a5a80" stroke-width="3.8" stroke-linecap="round"/>
<path d="M708.7 33.4L713.0 37.7" stroke="#fafafa" stroke-width="1.2" stroke-linecap="round"/>
<path d="M743 15.2H761.5L770 23.5V41Q770 44.2 766.8 44.2H743Q740.2 44.2 740.2 41V18Q740.2 15.2 743 15.2Z" fill="none" stroke="#2a5a80" stroke-width="2.6" stroke-linejoin="round"/>
<path d="M747.5 15V18.5Q747.5 20.3 749.3 20.3H755.5Q757.3 20.3 757.3 18.5V15" fill="none" stroke="#2a5a80" stroke-width="2.4"/><path d="M745.8 44V34Q745.8 31.3 748.5 31.3H762Q764.7 31.3 764.7 34V44" fill="none" stroke="#2a5a80" stroke-width="2.6"/>
<path d="M787.6 44.4H818.7" stroke="#2a5a80" stroke-width="3.2" stroke-linecap="round"/><path d="M790.3 38.2V26.1H815.5M804.6 15.5L815.8 26.1L804.6 37.2" fill="none" stroke="#2a5a80" stroke-width="3.4" stroke-linecap="round" stroke-linejoin="miter"/>
<circle cx="854" cy="29.8" r="15" fill="none" stroke="#2a5a80" stroke-width="2.4"/>
<text x="854" y="37.3" font-size="21.5" text-anchor="middle" class="ui" style="fill:#2a5a80" stroke="#2a5a80" stroke-width="0.5">?</text>
<path d="M551.5 27.2L557.5 33.8L563.5 27.2" fill="none" stroke="#a4a4a4" stroke-width="1.9"/>
<path d="M463.5 569.2L470 576.8L476.5 569.2" fill="none" stroke="#a4a4a4" stroke-width="1.9"/>
<path d="M11 88.7L20 98.3L29 88.7" fill="none" stroke="#333" stroke-width="1.6"/>
<path d="M41 172.2L50 181.8L59 172.2" fill="none" stroke="#333" stroke-width="1.6"/>
<path d="M45.5 126L54.5 135L45.5 144" fill="none" stroke="#333" stroke-width="1.6"/>
<path d="M51.5 83.5H57.5L60 86.5H71Q73 86.5 73 88.5V101Q73 103 71 103H51.5Q49.5 103 49.5 101V85.5Q49.5 83.5 51.5 83.5Z" fill="#fff" stroke="#999" stroke-width="1.1"/>
<path d="M84 124V141H101Z" fill="#3d85b8" stroke="#8a8a8a" stroke-width="1"/><path d="M87.3 131V137.7H94Z" fill="#e8e8e8" stroke="#9a9a9a" stroke-width="0.9"/>
<rect x="79.5" y="141.5" width="24" height="6" fill="#fff" stroke="#999" stroke-width="1"/><path d="M83 142V145M86 142V144M89 142V145M92 142V144M95 142V145M98 142V144M101 142V145" stroke="#999" stroke-width="0.8"/>
<rect x="78.7" y="164.7" width="25.6" height="25.6" fill="#fff" stroke="#c4c4c4" stroke-width="1.5"/>
<path d="M80 170H103M80 185.5H103" stroke="#5bb6d8" stroke-width="1.5"/><path d="M80 177.8H103" stroke="#2a5a80" stroke-width="1.7"/>
<circle cx="83.2" cy="168.5" r="1.7" fill="#e53030"/>
<circle cx="100" cy="171.5" r="1.7" fill="#e53030"/>
<circle cx="91.5" cy="174.2" r="1.7" fill="#e53030"/>
<circle cx="84.3" cy="181.3" r="1.7" fill="#e53030"/>
<circle cx="95.8" cy="186.3" r="1.7" fill="#e53030"/>
<path d="M49.5 362.5L53 366.5L58.8 359.5" fill="none" stroke="#fff" stroke-width="1.6"/>
<path d="M61.5 611.5L65 615.5L70.8 608.5" fill="none" stroke="#fff" stroke-width="1.6"/>
<path d="M466 436.5L470.5 432L475 436.5" fill="none" stroke="#888" stroke-width="1.2"/>
<path d="M466 447.5L470.5 452L475 447.5" fill="none" stroke="#888" stroke-width="1.2"/>
<path d="M466 481.5L470.5 477L475 481.5" fill="none" stroke="#888" stroke-width="1.2"/>
<path d="M466 492.5L470.5 497L475 492.5" fill="none" stroke="#e0e0e0" stroke-width="1.2"/>
<rect x="313.8" y="563.3" width="18" height="17.5" fill="#f4f4f4" stroke="#8c8c8c" stroke-width="1.3"/><path d="M313.8 568.3H331.8M313.8 572.8H331.8M313.8 577H331.8M319.8 563.3V580.8M325.8 563.3V580.8" stroke="#8c8c8c" stroke-width="1.2"/>
<rect x="323" y="572.5" width="11.8" height="11" fill="#e4e4e4" stroke="#999" stroke-width="0.8"/><path d="M324 576H334M324 580.6H334" stroke="#f2b600" stroke-width="2.3"/>
<rect x="248.90" y="210" width="1.9" height="5" fill="#a8a8a8"/><rect x="248.90" y="210" width="1.9" height="1.4" fill="#5a5a5a"/><rect x="248.90" y="213.4" width="1.9" height="1.5" fill="#5a5a5a"/>
<rect x="531" y="594.00" width="5.1" height="1.9" fill="#a8a8a8"/><rect x="531" y="594.00" width="1.5" height="1.9" fill="#5a5a5a"/><rect x="534.6" y="594.00" width="1.5" height="1.9" fill="#5a5a5a"/>
<rect x="251.60" y="210" width="1.9" height="5" fill="#a8a8a8"/><rect x="251.60" y="210" width="1.9" height="1.4" fill="#5a5a5a"/><rect x="251.60" y="213.4" width="1.9" height="1.5" fill="#5a5a5a"/>
<rect x="531" y="596.70" width="5.1" height="1.9" fill="#a8a8a8"/><rect x="531" y="596.70" width="1.5" height="1.9" fill="#5a5a5a"/><rect x="534.6" y="596.70" width="1.5" height="1.9" fill="#5a5a5a"/>
<rect x="254.30" y="210" width="1.9" height="5" fill="#a8a8a8"/><rect x="254.30" y="210" width="1.9" height="1.4" fill="#5a5a5a"/><rect x="254.30" y="213.4" width="1.9" height="1.5" fill="#5a5a5a"/>
<rect x="531" y="599.40" width="5.1" height="1.9" fill="#a8a8a8"/><rect x="531" y="599.40" width="1.5" height="1.9" fill="#5a5a5a"/><rect x="534.6" y="599.40" width="1.5" height="1.9" fill="#5a5a5a"/>
<rect x="257.00" y="210" width="1.9" height="5" fill="#a8a8a8"/><rect x="257.00" y="210" width="1.9" height="1.4" fill="#5a5a5a"/><rect x="257.00" y="213.4" width="1.9" height="1.5" fill="#5a5a5a"/>
<rect x="531" y="602.10" width="5.1" height="1.9" fill="#a8a8a8"/><rect x="531" y="602.10" width="1.5" height="1.9" fill="#5a5a5a"/><rect x="534.6" y="602.10" width="1.5" height="1.9" fill="#5a5a5a"/>
<rect x="259.70" y="210" width="1.9" height="5" fill="#a8a8a8"/><rect x="259.70" y="210" width="1.9" height="1.4" fill="#5a5a5a"/><rect x="259.70" y="213.4" width="1.9" height="1.5" fill="#5a5a5a"/>
<rect x="531" y="604.80" width="5.1" height="1.9" fill="#a8a8a8"/><rect x="531" y="604.80" width="1.5" height="1.9" fill="#5a5a5a"/><rect x="534.6" y="604.80" width="1.5" height="1.9" fill="#5a5a5a"/>
<rect x="262.40" y="210" width="1.9" height="5" fill="#a8a8a8"/><rect x="262.40" y="210" width="1.9" height="1.4" fill="#5a5a5a"/><rect x="262.40" y="213.4" width="1.9" height="1.5" fill="#5a5a5a"/>
<rect x="531" y="607.50" width="5.1" height="1.9" fill="#a8a8a8"/><rect x="531" y="607.50" width="1.5" height="1.9" fill="#5a5a5a"/><rect x="534.6" y="607.50" width="1.5" height="1.9" fill="#5a5a5a"/>
<rect x="265.10" y="210" width="1.9" height="5" fill="#a8a8a8"/><rect x="265.10" y="210" width="1.9" height="1.4" fill="#5a5a5a"/><rect x="265.10" y="213.4" width="1.9" height="1.5" fill="#5a5a5a"/>
<rect x="531" y="610.20" width="5.1" height="1.9" fill="#a8a8a8"/><rect x="531" y="610.20" width="1.5" height="1.9" fill="#5a5a5a"/><rect x="534.6" y="610.20" width="1.5" height="1.9" fill="#5a5a5a"/>
<rect x="267.80" y="210" width="1.9" height="5" fill="#a8a8a8"/><rect x="267.80" y="210" width="1.9" height="1.4" fill="#5a5a5a"/><rect x="267.80" y="213.4" width="1.9" height="1.5" fill="#5a5a5a"/>
<rect x="531" y="612.90" width="5.1" height="1.9" fill="#a8a8a8"/><rect x="531" y="612.90" width="1.5" height="1.9" fill="#5a5a5a"/><rect x="534.6" y="612.90" width="1.5" height="1.9" fill="#5a5a5a"/>
<rect x="270.50" y="210" width="1.9" height="5" fill="#a8a8a8"/><rect x="270.50" y="210" width="1.9" height="1.4" fill="#5a5a5a"/><rect x="270.50" y="213.4" width="1.9" height="1.5" fill="#5a5a5a"/>
<rect x="531" y="615.60" width="5.1" height="1.9" fill="#a8a8a8"/><rect x="531" y="615.60" width="1.5" height="1.9" fill="#5a5a5a"/><rect x="534.6" y="615.60" width="1.5" height="1.9" fill="#5a5a5a"/>
<rect x="273.20" y="210" width="1.9" height="5" fill="#a8a8a8"/><rect x="273.20" y="210" width="1.9" height="1.4" fill="#5a5a5a"/><rect x="273.20" y="213.4" width="1.9" height="1.5" fill="#5a5a5a"/>
<rect x="531" y="618.30" width="5.1" height="1.9" fill="#a8a8a8"/><rect x="531" y="618.30" width="1.5" height="1.9" fill="#5a5a5a"/><rect x="534.6" y="618.30" width="1.5" height="1.9" fill="#5a5a5a"/>
<rect x="275.90" y="210" width="1.9" height="5" fill="#a8a8a8"/><rect x="275.90" y="210" width="1.9" height="1.4" fill="#5a5a5a"/><rect x="275.90" y="213.4" width="1.9" height="1.5" fill="#5a5a5a"/>
<rect x="531" y="621.00" width="5.1" height="1.9" fill="#a8a8a8"/><rect x="531" y="621.00" width="1.5" height="1.9" fill="#5a5a5a"/><rect x="534.6" y="621.00" width="1.5" height="1.9" fill="#5a5a5a"/>
<rect x="278.60" y="210" width="1.9" height="5" fill="#a8a8a8"/><rect x="278.60" y="210" width="1.9" height="1.4" fill="#5a5a5a"/><rect x="278.60" y="213.4" width="1.9" height="1.5" fill="#5a5a5a"/>
<rect x="531" y="623.70" width="5.1" height="1.9" fill="#a8a8a8"/><rect x="531" y="623.70" width="1.5" height="1.9" fill="#5a5a5a"/><rect x="534.6" y="623.70" width="1.5" height="1.9" fill="#5a5a5a"/>
</svg>
</body></html>
